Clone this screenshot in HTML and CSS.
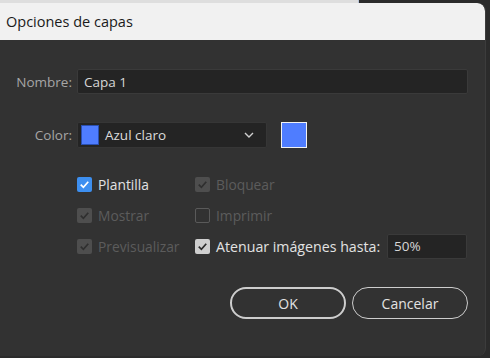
FILE: index.html
```html
<!DOCTYPE html>
<html lang="es">
<head>
    <meta charset="UTF-8">
    <title>Opciones de capas</title>
    <link rel="stylesheet" href="styles.css">
</head>
<body>
    <div class="backdrop">
        <div class="backdrop-strip"></div>
    </div>

    <div class="dialog">
        <div class="titlebar">Opciones de capas</div>

        <div class="dialog-body">
            <div class="field-row name-row">
                <label class="field-label" for="layerName">Nombre:</label>
                <input type="text" id="layerName" class="text-input wide" value="Capa 1">
            </div>

            <div class="field-row color-row">
                <span class="field-label">Color:</span>
                <div class="select">
                    <span class="swatch-small"></span>
                    <span class="select-text">Azul claro</span>
                    <svg class="chevron" width="10" height="6" viewBox="0 0 10 6">
                        <path d="M1 1 L5 5 L9 1" fill="none" stroke="#d0d0d0" stroke-width="1.4"/>
                    </svg>
                </div>
                <span class="swatch-big"></span>
            </div>

            <div class="options">
                <div class="option on">
                    <span class="box checked"><svg viewBox="0 0 16 16"><path d="M4 8.2 L6.8 11 L12 5" /></svg></span>
                    Plantilla
                </div>
                <div class="option disabled">
                    <span class="box checked"><svg viewBox="0 0 16 16"><path d="M4 8.2 L6.8 11 L12 5" /></svg></span>
                    Bloquear
                </div>
                <div class="option disabled">
                    <span class="box checked"><svg viewBox="0 0 16 16"><path d="M4 8.2 L6.8 11 L12 5" /></svg></span>
                    Mostrar
                </div>
                <div class="option disabled">
                    <span class="box empty"></span>
                    Imprimir
                </div>
                <div class="option disabled">
                    <span class="box checked"><svg viewBox="0 0 16 16"><path d="M4 8.2 L6.8 11 L12 5" /></svg></span>
                    Previsualizar
                </div>
                <div class="option on dim-row">
                    <span class="box grey"><svg viewBox="0 0 16 16"><path d="M4 8.2 L6.8 11 L12 5" /></svg></span>
                    <span class="dim-label">Atenuar imágenes hasta:</span>
                    <input type="text" class="text-input percent" value="50%">
                </div>
            </div>

            <div class="dialog-footer">
                <button type="button" class="btn btn-ok">OK</button>
                <button type="button" class="btn btn-cancel">Cancelar</button>
            </div>
        </div>
    </div>
</body>
</html>
```

FILE: styles.css
```css
body {
    margin: 0;
    width: 490px;
    height: 358px;
    overflow: hidden;
    background-color: #2b2b2b;
    font-family: 'Open Sans', 'Noto Sans', sans-serif;
}
.backdrop {
    height: 3px;
    display: flex;
}
.backdrop-strip {
    width: 358px;
    background-color: #dedede;
    border-right: 1px solid #b8c4d8;
}
.dialog {
    width: 486px;
    height: 353px;
    border-radius: 0 8px 8px 0;
    overflow: hidden;
    background-color: #323232;
    border-right: 1px solid #3c3c3c;
    box-sizing: border-box;
}
.titlebar {
    height: 37px;
    background-color: #f1f1f1;
    color: #1a1a1a;
    font-size: 14.5px;
    padding-left: 6px;
    display: flex;
    align-items: center;
    border-top-right-radius: 8px;
}
.dialog-body {
    padding: 29px 17px 0 0;
}
.field-row {
    display: flex;
    align-items: center;
}
.field-label {
    width: 72px;
    text-align: right;
    padding-right: 5px;
    font-size: 13.5px;
    color: #a6a6a6;
}
.text-input {
    box-sizing: border-box;
    height: 25px;
    background-color: #242424;
    border: 1px solid #3a3a3a;
    border-radius: 2px;
    color: #d6d6d6;
    font-family: inherit;
    font-size: 13.5px;
    padding: 0 6px;
    outline: none;
}
.wide {
    width: 391px;
}
.color-row {
    margin-top: 28px;
}
.select {
    box-sizing: border-box;
    width: 190px;
    height: 26px;
    background-color: #242424;
    border: 1px solid #363636;
    border-radius: 2px;
    display: flex;
    align-items: center;
    padding: 0 12px 0 3px;
}
.swatch-small {
    width: 18px;
    height: 20px;
    background-color: #4f7dff;
    border: 1px solid #2a4fb0;
    box-sizing: border-box;
}
.select-text {
    margin-left: 6px;
    flex: 1;
    color: #dcdcdc;
    font-size: 13.5px;
}
.swatch-big {
    margin-left: 14px;
    width: 26px;
    height: 26px;
    box-sizing: border-box;
    background-color: #4f7dff;
    border: 1px solid #f2f2f2;
}
.options {
    margin: 25px 0 0 77px;
    display: grid;
    grid-template-columns: 118px 272px;
    row-gap: 9px;
}
.option {
    display: flex;
    align-items: center;
    gap: 6px;
    height: 22px;
    font-size: 13.8px;
    white-space: nowrap;
}
.option.on {
    color: #e2e2e2;
}
.option.disabled {
    color: #5c5c5c;
}
.box {
    width: 15px;
    height: 15px;
    flex-shrink: 0;
    box-sizing: border-box;
    border-radius: 2px;
    display: flex;
}
.box svg {
    width: 15px;
    height: 15px;
}
.box path {
    fill: none;
    stroke-width: 1.8;
}
.option.on .box.checked {
    background-color: #3d8ff0;
}
.option.on .box.checked path {
    stroke: #ffffff;
}
.option.disabled .box.checked {
    background-color: #4e4e4e;
}
.option.disabled .box.checked path {
    stroke: #2f2f2f;
}
.box.empty {
    border: 1px solid #5a5a5a;
}
.box.grey {
    background-color: #cfcfcf;
}
.box.grey path {
    stroke: #2b2b2b;
}
.dim-label {
    font-size: 14.2px;
}
.percent {
    width: 80px;
    flex-shrink: 0;
    margin-left: auto;
}
.dialog-footer {
    margin-top: 30px;
    display: flex;
    justify-content: flex-end;
    gap: 6px;
}
.btn {
    width: 116px;
    height: 32px;
    border-radius: 16px;
    background-color: transparent;
    font-family: inherit;
    font-size: 14px;
    color: #e2e2e2;
    cursor: pointer;
}
.btn-ok {
    border: 2px solid #cdcdcd;
}
.btn-cancel {
    border: 1px solid #cdcdcd;
}
```
